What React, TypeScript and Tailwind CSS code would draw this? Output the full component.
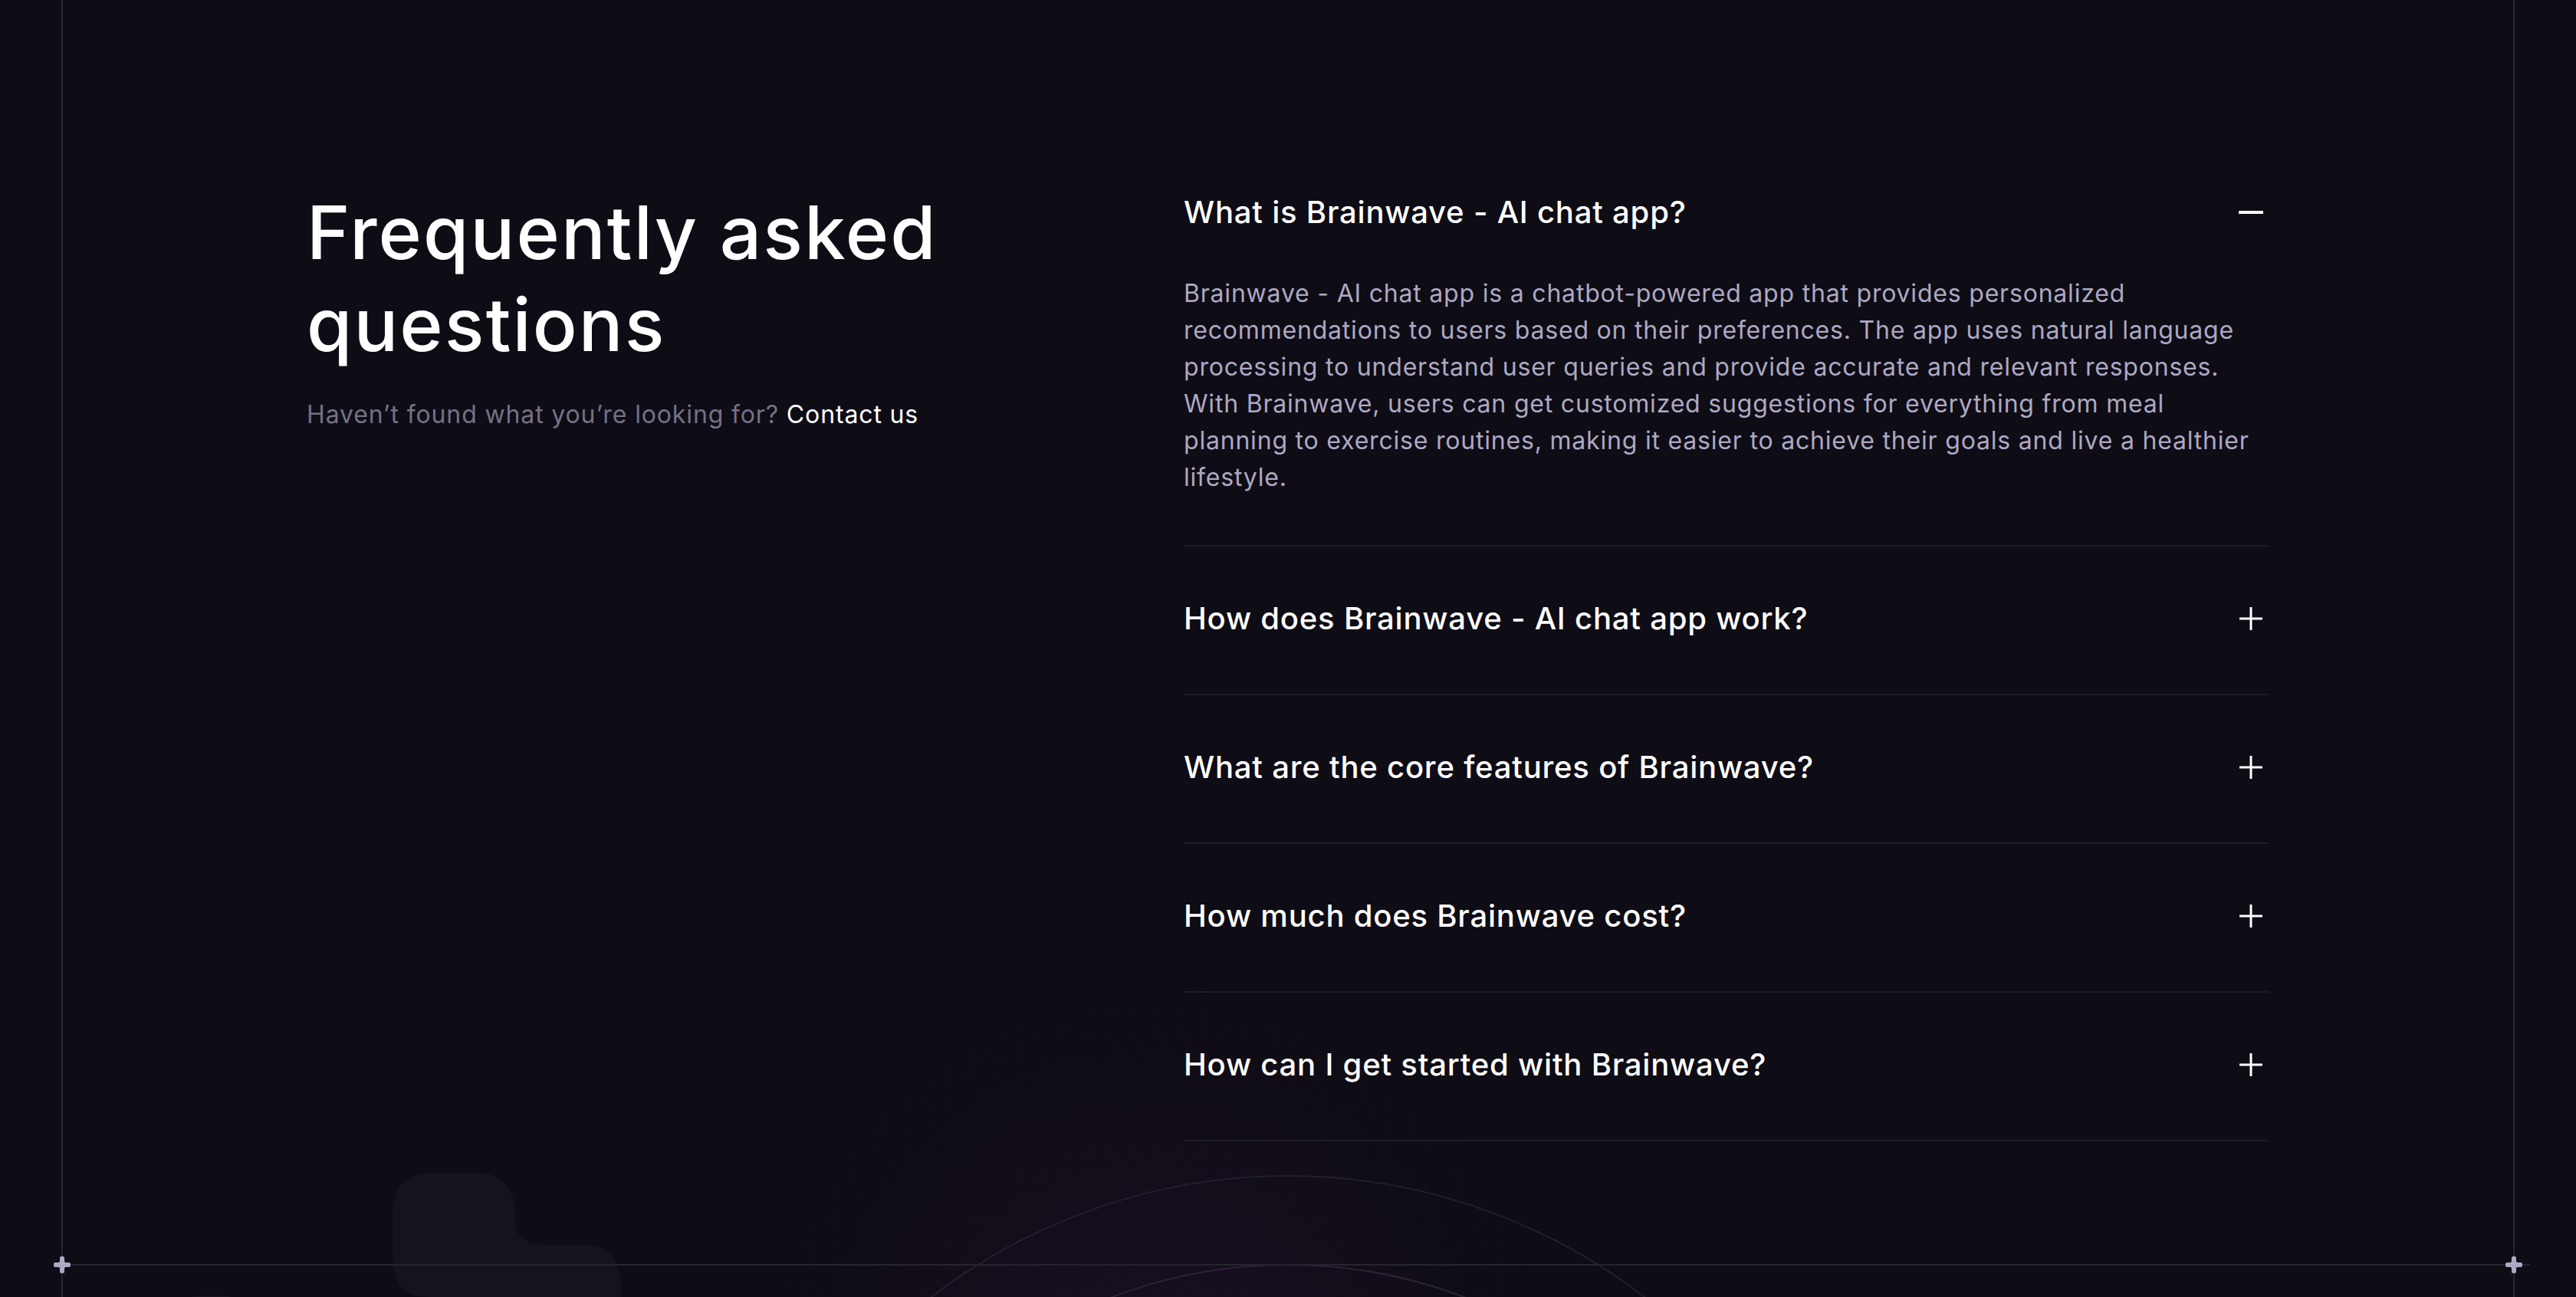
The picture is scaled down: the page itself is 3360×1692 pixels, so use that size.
import React from "react";

const faqs = [
  "How does Brainwave - AI chat app work?",
  "What are the core features of Brainwave?",
  "How much does Brainwave cost?",
  "How can I get started with Brainwave?",
];

function PlusMark({ className }: { className: string }) {
  return (
    <svg
      className={className}
      width="22"
      height="22"
      viewBox="0 0 11 11"
      fill="none"
    >
      <path
        d="M7 1a1 1 0 0 0-1-1H5a1 1 0 0 0-1 1v2a1 1 0 0 1-1 1H1a1 1 0 0 0-1 1v1a1 1 0 0 0 1 1h2a1 1 0 0 1 1 1v2a1 1 0 0 0 1 1h1a1 1 0 0 0 1-1V8a1 1 0 0 1 1-1h2a1 1 0 0 0 1-1V5a1 1 0 0 0-1-1H8a1 1 0 0 1-1-1V1z"
        fill="#ADA8C4"
      />
    </svg>
  );
}

function PlusIcon() {
  return (
    <svg className="shrink-0" width="48" height="48" viewBox="0 0 48 48" fill="none">
      <rect x="9" y="22.5" width="30" height="3" rx="0.5" fill="#FFFFFF" />
      <rect x="22.5" y="9" width="3" height="30" rx="0.5" fill="#FFFFFF" />
    </svg>
  );
}

function MinusIcon() {
  return (
    <svg className="shrink-0" width="48" height="48" viewBox="0 0 48 48" fill="none">
      <rect x="8" y="22" width="32" height="4" rx="0.5" fill="#FFFFFF" />
    </svg>
  );
}

export default function App() {
  return (
    <div className="relative h-[1692px] w-full overflow-hidden bg-[#0E0C15] font-['Inter',sans-serif] text-white">
      {/* background decoration */}
      <div className="pointer-events-none absolute inset-0 bg-[radial-gradient(circle_at_1500px_1800px,rgba(70,28,80,0.2),transparent_520px)]" />
      <svg
        className="pointer-events-none absolute left-0 top-0"
        width="3360"
        height="1692"
        viewBox="0 0 3360 1692"
        fill="none"
      >
        <path
          d="M565 1530 H620 Q672 1530 672 1585 V1590 Q672 1624 710 1624 H760 Q810 1624 810 1680 V1692 H560 Q512 1692 512 1640 V1585 Q512 1530 565 1530 Z"
          fill="#15131D"
        />
        <path
          d="M250 1692 Q256 1690 270 1690 H290 Q300 1690 302 1692 Z"
          fill="#15131D"
        />
        <circle cx="1680" cy="2297" r="763" stroke="#221F2D" strokeWidth="2" />
        <circle cx="1680" cy="2297" r="647" stroke="#2A2235" strokeWidth="2" />
        {/* page frame lines */}
        <rect x="80" y="0" width="2" height="1692" fill="#26252F" />
        <rect x="3278" y="0" width="2" height="1692" fill="#26252F" />
        <rect x="70" y="1649" width="3230" height="2" fill="#26252F" />
      </svg>
      <PlusMark className="pointer-events-none absolute left-[70px] top-[1639px]" />
      <PlusMark className="pointer-events-none absolute left-[3268px] top-[1639px]" />

      {/* content */}
      <div className="relative mx-auto max-w-[2800px] px-[120px] pt-[183px]">
        <div className="flex justify-between">
          <div className="pt-[60px]">
            <h2 className="text-[96px] leading-[120px] font-medium tracking-[0.022em] text-white">
              Frequently asked
              <br />
              questions
            </h2>
            <p className="mt-[34px] text-[32px] leading-[48px] tracking-[0.027em] text-[#757185]">
              Haven’t found what you’re looking for?{" "}
              <a className="text-white" href="#">
                Contact us
              </a>
            </p>
          </div>

          <div className="w-[1416px]">
            <div className="border-b-2 border-[#1C1B26] pt-[62px] pb-[64px]">
              <div className="flex h-[64px] items-center justify-between">
                <h3 className="text-[40px] leading-[64px] font-medium tracking-[0.02em] text-white">
                  What is Brainwave - AI chat app?
                </h3>
                <MinusIcon />
              </div>
              <p className="mt-[50px] text-[32px] leading-[48px] font-normal tracking-[0.025em] text-[#ADA8C3]">
                Brainwave - AI chat app is a chatbot-powered app that provides
                personalized recommendations to users based on their
                preferences. The app uses natural language processing to
                understand user queries and provide accurate and relevant
                responses. With Brainwave, users can get customized suggestions
                for everything from meal planning to exercise routines, making
                it easier to achieve their goals and live a healthier lifestyle.
              </p>
            </div>
            {faqs.map((q) => (
              <div
                key={q}
                className="border-b-2 border-[#1C1B26] pt-[62px] pb-[66px]"
              >
                <div className="flex h-[64px] items-center justify-between">
                  <h3 className="text-[40px] leading-[64px] font-medium tracking-[0.02em] text-white">
                    {q}
                  </h3>
                  <PlusIcon />
                </div>
              </div>
            ))}
          </div>
        </div>
      </div>
    </div>
  );
}
